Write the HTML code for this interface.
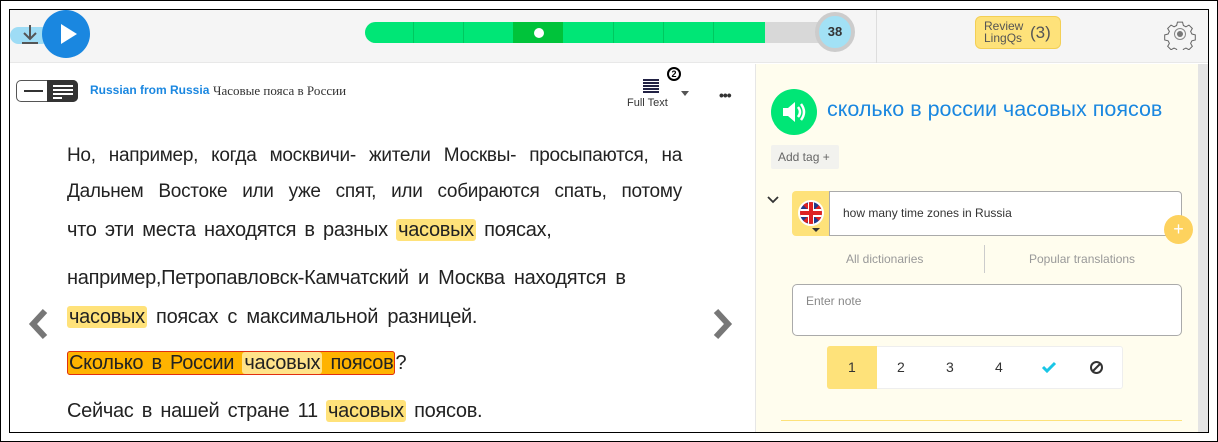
<!DOCTYPE html>
<html><head><meta charset="utf-8"><style>
*{margin:0;padding:0;box-sizing:border-box}
body{width:1218px;height:442px;background:#fff;position:relative;overflow:hidden;font-family:"Liberation Sans",sans-serif;}
.abs{position:absolute}
.frame{position:absolute;left:0;top:0;width:1218px;height:442px;border:1px solid #000;}
.inner{position:absolute;left:9px;top:9px;width:1200px;height:424px;border:1px solid #000;overflow:hidden;background:#fff}
.ln{position:absolute;left:57px;font-size:20px;color:#222;white-space:nowrap;line-height:26px;letter-spacing:-0.3px}
.j{width:615px;text-align:justify;text-align-last:justify;font-size:19px}
.hl{background:#ffe27a;border-radius:3px;padding:0 2px}
</style></head><body>
<div class="frame"></div>
<div class="inner">
 <div class="abs" style="left:0;top:0;width:1198px;height:53px;background:#f5f5f5;border-bottom:1px solid #e8e8e8"></div>
 <div class="abs" style="left:0;top:17px;width:40px;height:17px;background:#9edcf5;border-radius:9px"></div>
 <svg class="abs" style="left:10px;top:14px" width="20" height="22" viewBox="0 0 20 22"><path d="M10 1v13M4 9l6 6 6-6M2 19h16" stroke="#555" stroke-width="2" fill="none"/></svg>
 <div class="abs" style="left:32px;top:0;width:48px;height:48px;background:#1a87e0;border-radius:50%"></div>
 <svg class="abs" style="left:50px;top:13px" width="18" height="22"><path d="M1 1L17 11L1 21Z" fill="#fff"/></svg>
 <div class="abs" style="left:355px;top:12px;width:470px;height:21px;background:#d8d8d8;border-radius:11px"></div>
 <div class="abs" style="left:355px;top:12px;width:400px;height:21px;background:#00e676;border-radius:11px 0 0 11px"></div>
 <div class="abs" style="left:403px;top:12px;width:1px;height:21px;background:#00c85f"></div>
 <div class="abs" style="left:453px;top:12px;width:1px;height:21px;background:#00c85f"></div>
 <div class="abs" style="left:503px;top:12px;width:50px;height:21px;background:#00c33a"></div>
 <div class="abs" style="left:524px;top:18px;width:10px;height:10px;background:#fff;border-radius:50%"></div>
 <div class="abs" style="left:603px;top:12px;width:1px;height:21px;background:#00c85f"></div>
 <div class="abs" style="left:653px;top:12px;width:1px;height:21px;background:#00c85f"></div>
 <div class="abs" style="left:703px;top:12px;width:1px;height:21px;background:#00c85f"></div>
 <div class="abs" style="left:805px;top:2px;width:40px;height:40px;background:#a2e1f5;border:4px solid #ccc;border-radius:50%;font-size:13px;font-weight:bold;color:#333;text-align:center;line-height:32px">38</div>
 <div class="abs" style="left:866px;top:0;width:1px;height:53px;background:#ddd"></div>
 <div class="abs" style="left:965px;top:6px;width:86px;height:33px;background:#fee27a;border:1px solid #f3cf55;border-radius:6px;color:#555"><span class="abs" style="left:8px;top:3px;font-size:12px;line-height:12px">Review<br>LingQs</span><span class="abs" style="left:54px;top:6px;font-size:17px">(3)</span></div>
 <svg class="abs" style="left:1154px;top:8px" width="32" height="32" viewBox="0 0 32 32"><path d="M13 2h6l1 4 3 1.5 3.5-2 4 4-2 3.5 1.5 3 4 1v6l-4 1-1.5 3 2 3.5-4 4-3.5-2-3 1.5-1 4h-6l-1-4-3-1.5-3.5 2-4-4 2-3.5-1.5-3-4-1v-6l4-1 1.5-3-2-3.5 4-4 3.5 2 3-1.5z" transform="translate(16 16) scale(0.85) translate(-16 -16)" fill="none" stroke="#666" stroke-width="1.2"/><circle cx="16" cy="16" r="3" fill="#777"/><circle cx="16" cy="16" r="5.5" fill="none" stroke="#888"/></svg>

 <div class="abs" style="left:6px;top:70px;width:62px;height:22px;border:1px solid #555;border-radius:5px;background:#fff"></div>
 <div class="abs" style="left:14px;top:80px;width:19px;height:2px;background:#333"></div>
 <div class="abs" style="left:37px;top:70px;width:31px;height:22px;background:#333;border-radius:0 5px 5px 0"></div>
 <div class="abs" style="left:43px;top:75px;width:20px;height:2px;background:#fff;box-shadow:0 4px 0 #fff,0 8px 0 #fff"></div>
 <div class="abs" style="left:43px;top:87px;width:9px;height:2px;background:#fff"></div>
 <div class="abs" style="left:80px;top:73px;font-size:12px;font-weight:bold;color:#1a87e0">Russian from Russia</div>
 <div class="abs" style="left:203px;top:73px;font-size:13px;color:#333;font-family:'Liberation Serif',serif">Часовые пояса в России</div>
 <div class="abs" style="left:633px;top:69px;width:16px;height:2px;background:#224;box-shadow:0 3px 0 #224,0 6px 0 #224,0 9px 0 #224,0 12px 0 #224"></div>
 <div class="abs" style="left:657px;top:57px;width:14px;height:14px;border:2px solid #000;border-radius:50%;font-size:9px;font-weight:bold;text-align:center;line-height:10px">2</div>
 <div class="abs" style="left:671px;top:81px;width:0;height:0;border:4px solid transparent;border-top:5px solid #555"></div>
 <div class="abs" style="left:617px;top:87px;font-size:11px;color:#333">Full Text</div>
 <div class="abs" style="left:709px;top:77px;font-size:14px;font-weight:bold;color:#333;letter-spacing:-1px">•••</div>

 <div class="ln j" style="top:133px">Но, например, когда москвичи- жители Москвы- просыпаются, на</div>
 <div class="ln j" style="top:169px">Дальнем Востоке или уже спят, или собираются спать, потому</div>
 <div class="ln" style="top:207px;word-spacing:3px">что эти места находятся в разных <span class="hl">часовых</span> поясах,</div>
 <div class="ln" style="top:255px;word-spacing:4px">например,Петропавловск-Камчатский и Москва находятся в</div>
 <div class="ln" style="top:294px;word-spacing:4px"><span class="hl">часовых</span> поясах с максимальной разницей.</div>
 <div class="ln" style="top:340px;word-spacing:3px"><span style="background:#ffb300;border:1px solid #e03010;border-radius:3px;padding:0 1px">Сколько в России <span style="background:#ffe38a;border-radius:3px;padding:0 2px">часовых</span> поясов</span>?</div>
 <div class="ln" style="top:388px;word-spacing:3px">Сейчас в нашей стране 11 <span class="hl">часовых</span> поясов.</div>
 <svg class="abs" style="left:15px;top:298px" width="24" height="32"><path d="M20 3L8 16l12 13" stroke="#777" stroke-width="6" fill="none"/></svg>
 <svg class="abs" style="left:702px;top:298px" width="24" height="32"><path d="M4 3l12 13L4 29" stroke="#777" stroke-width="6" fill="none"/></svg>

 <div class="abs" style="left:745px;top:54px;width:443px;height:380px;background:#fffdee;border-left:1px solid #e6e6e6"></div>
 <div class="abs" style="left:1188px;top:54px;width:12px;height:380px;background:#e4e4e4"></div>
 <div class="abs" style="left:761px;top:79px;width:46px;height:46px;background:#00e676;border-radius:50%"></div>
 <svg class="abs" style="left:771px;top:90px" width="28" height="24"><path d="M2 8h5l7-6v20l-7-6H2z" fill="#fff"/><path d="M17 7q4 5 0 10M20 4q6 8 0 16" stroke="#fff" stroke-width="2.5" fill="none"/></svg>
 <div class="abs" style="left:817px;top:87px;font-size:21.5px;color:#1a87e0">сколько в россии часовых поясов</div>
 <div class="abs" style="left:761px;top:135px;width:68px;height:24px;background:#f2f2ee;border-radius:2px;font-size:12px;color:#666;line-height:24px;padding-left:7px">Add tag +</div>
 <svg class="abs" style="left:756px;top:185px" width="14" height="10"><path d="M2 2l5 5 5-5" stroke="#333" stroke-width="1.8" fill="none"/></svg>
 <div class="abs" style="left:782px;top:181px;width:38px;height:45px;background:#fee27a;border-radius:4px 0 0 4px"></div>
 <div class="abs" style="left:788px;top:190px;width:26px;height:26px;border-radius:50%;background:#1e3a8a;overflow:hidden;border:2px solid #fff">
  <div class="abs" style="left:-6px;top:9px;width:40px;height:4px;background:#d22;transform:rotate(45deg)"></div>
  <div class="abs" style="left:-6px;top:9px;width:40px;height:4px;background:#d22;transform:rotate(-45deg)"></div>
  <div class="abs" style="left:0;top:7px;width:26px;height:8px;background:#fff"></div>
  <div class="abs" style="left:8px;top:0;width:6px;height:26px;background:#fff"></div>
  <div class="abs" style="left:0;top:9px;width:26px;height:4px;background:#d22"></div>
  <div class="abs" style="left:9px;top:0;width:4px;height:26px;background:#d22"></div>
 </div>
 <div class="abs" style="left:802px;top:218px;border:4px solid transparent;border-top:4px solid #333"></div>
 <div class="abs" style="left:819px;top:181px;width:353px;height:45px;background:#fff;border:1px solid #aaa;border-radius:0 4px 4px 0;font-size:12px;color:#333;padding:14px 0 0 13px">how many time zones in Russia</div>
 <div class="abs" style="left:1154px;top:205px;width:29px;height:29px;background:#fdd25e;border-radius:50%;color:#fff;font-size:18px;text-align:center;line-height:29px">+</div>
 <div class="abs" style="left:836px;top:242px;font-size:12px;color:#999">All dictionaries</div>
 <div class="abs" style="left:974px;top:235px;width:1px;height:28px;background:#ccc"></div>
 <div class="abs" style="left:1019px;top:242px;font-size:12px;color:#999">Popular translations</div>
 <div class="abs" style="left:782px;top:274px;width:390px;height:52px;background:#fff;border:1px solid #aaa;border-radius:5px;font-size:12px;color:#888;padding:9px 0 0 13px">Enter note</div>
 <div class="abs" style="left:817px;top:336px;width:296px;height:43px;background:#fff;border:1px solid #eee;border-radius:3px"></div>
 <div class="abs" style="left:817px;top:336px;width:50px;height:43px;background:#fee27a;border-radius:3px 0 0 3px"></div>
 <div class="abs" style="left:838px;top:349px;font-size:14px;color:#333">1</div>
 <div class="abs" style="left:887px;top:349px;font-size:14px;color:#333">2</div>
 <div class="abs" style="left:936px;top:349px;font-size:14px;color:#333">3</div>
 <div class="abs" style="left:985px;top:349px;font-size:14px;color:#333">4</div>
 <svg class="abs" style="left:1031px;top:351px" width="16" height="12"><path d="M2 6l4 4 8-8" stroke="#19c6e6" stroke-width="3" fill="none"/></svg>
 <svg class="abs" style="left:1079px;top:350px" width="15" height="15"><circle cx="7.5" cy="7.5" r="5.5" stroke="#333" stroke-width="2" fill="none"/><path d="M3.5 11.5l8-8" stroke="#333" stroke-width="2"/></svg>
 <div class="abs" style="left:771px;top:410px;width:401px;height:1px;background:#fde27a"></div>
</div>
</body></html>
